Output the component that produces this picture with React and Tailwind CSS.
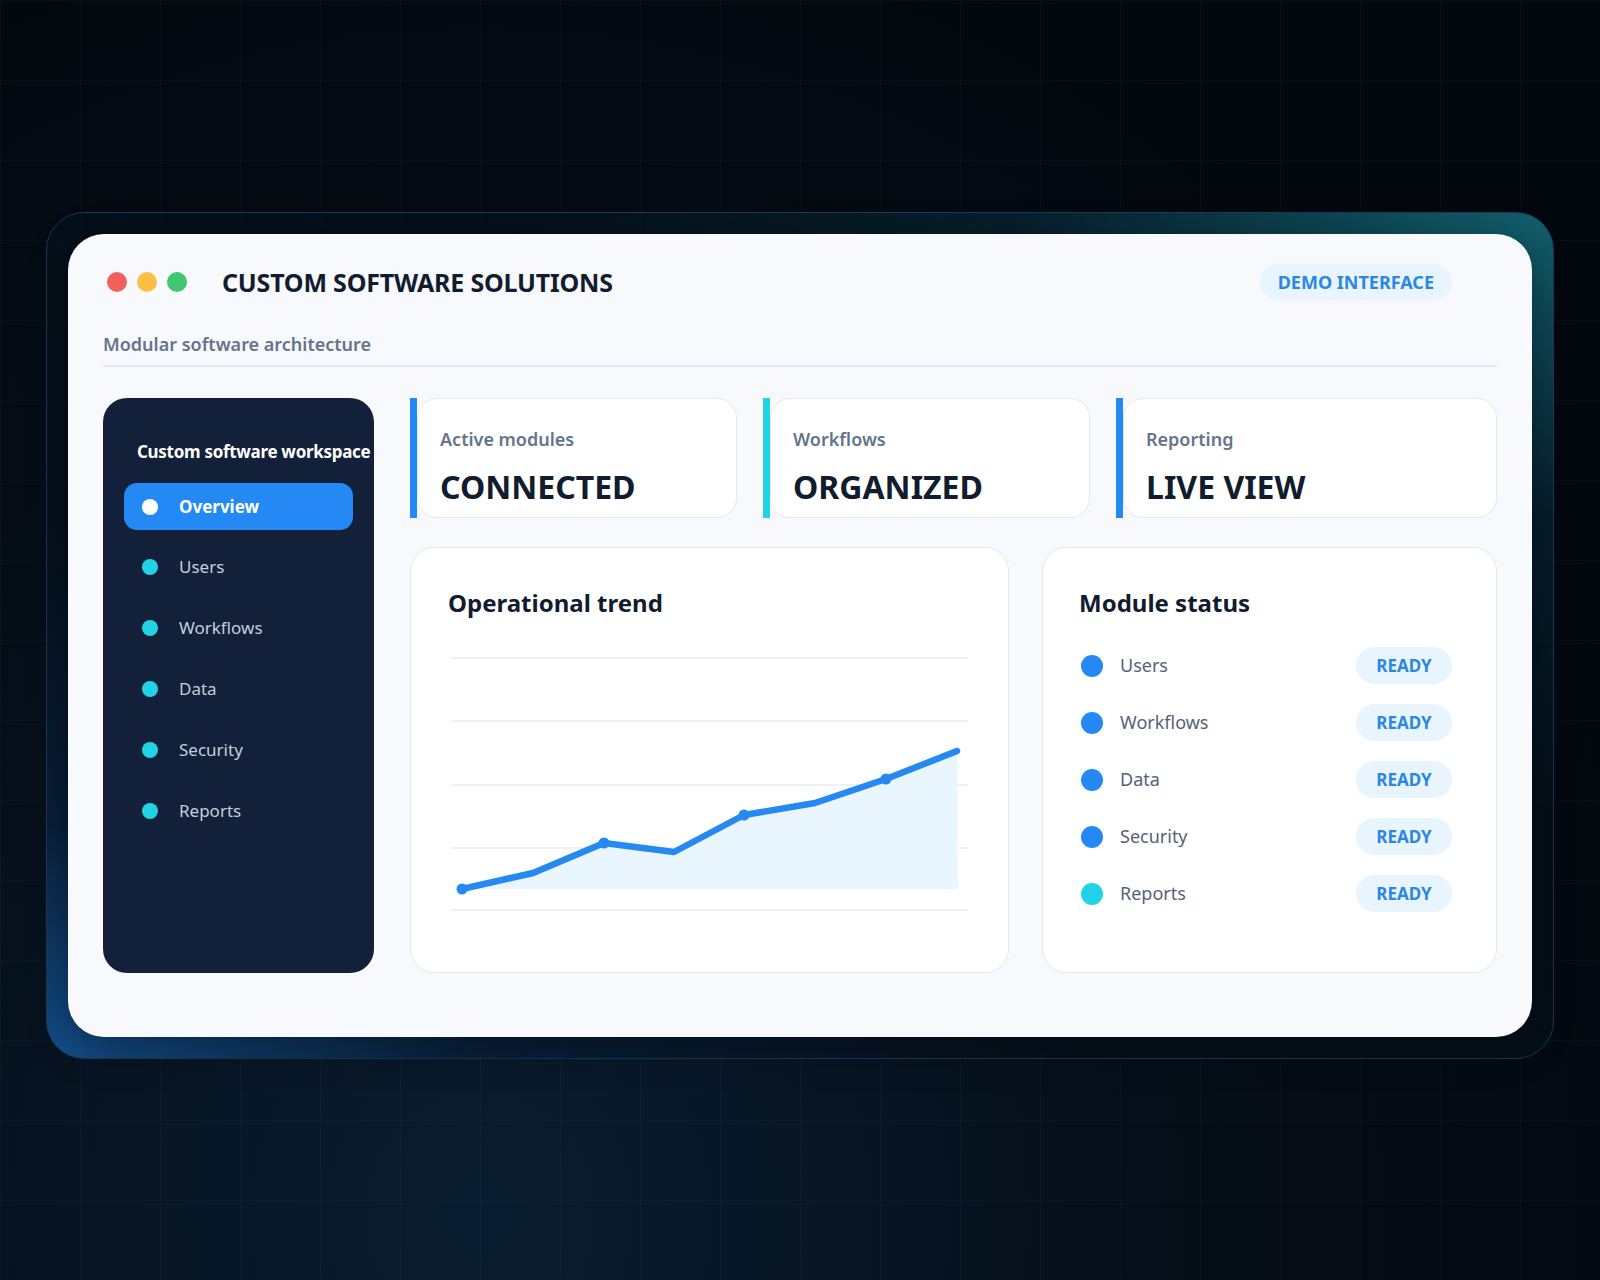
import React from "react";

const navItems = ["Users", "Workflows", "Data", "Security", "Reports"];
const modules = [
  { name: "Users", color: "bg-[#2589f5]" },
  { name: "Workflows", color: "bg-[#2589f5]" },
  { name: "Data", color: "bg-[#2589f5]" },
  { name: "Security", color: "bg-[#2589f5]" },
  { name: "Reports", color: "bg-[#22d3e6]" },
];

const pts = [
  [11, 238],
  [82, 222],
  [153, 192],
  [223, 201],
  [293, 164],
  [364, 152],
  [435, 128],
  [506, 100],
];

function Chart() {
  const line = pts.map((p) => p.join(",")).join(" ");
  const area = `11,238 ${line} 507,238`;
  return (
    <svg width="517" height="262" viewBox="0 0 517 262" className="block">
      {[7, 70, 134, 197, 259].map((y) => (
        <line key={y} x1="0" x2="517" y1={y} y2={y} stroke="#edf1f5" strokeWidth="2" />
      ))}
      <polygon points={area} fill="#e9f5ff" />
      <polyline
        points={line}
        fill="none"
        stroke="#2589f0"
        strokeWidth="6.5"
        strokeLinejoin="round"
        strokeLinecap="round"
      />
      {[pts[0], pts[2], pts[4], pts[6]].map(([x, y]) => (
        <circle key={x} cx={x} cy={y} r="5.5" fill="#2589f0" />
      ))}
    </svg>
  );
}

function Stat({ label, value, bar, className }) {
  return (
    <div className={`flex h-full ${className}`}>
      <div className={`w-[7px] h-full ${bar}`} />
      <div className="flex-1 h-full rounded-[20px] border border-[#e3e8ef] bg-white pl-[22px] pt-[28px]">
        <div className="text-[18px] leading-[24px] font-semibold text-[#64748b]">{label}</div>
        <div className="mt-[16px] text-[32px] leading-[40px] font-bold text-[#111c2e]">{value}</div>
      </div>
    </div>
  );
}

export default function App() {
  return (
    <div className="relative w-full min-h-[1280px] overflow-hidden bg-[#040a11] bg-[radial-gradient(ellipse_at_30%_95%,#0a1d30_0%,#050d17_45%,#03080e_80%)] font-['Noto_Sans','Open_Sans',sans-serif]">
      <div className="pointer-events-none absolute inset-0 bg-[linear-gradient(to_right,rgba(120,160,200,0.045)_1px,transparent_1px),linear-gradient(to_bottom,rgba(120,160,200,0.045)_1px,transparent_1px)] bg-[size:80px_80px]" />
      <div className="relative pt-[212px] pl-[46px]">
        <div className="w-[1508px] h-[847px] rounded-[38px] border border-[#1a3858] p-[21px] bg-[radial-gradient(ellipse_at_100%_0%,rgba(20,110,125,0.85)_0%,rgba(10,60,80,0.35)_25%,transparent_50%),radial-gradient(ellipse_at_0%_100%,rgba(20,85,150,0.9)_0%,rgba(12,50,95,0.4)_20%,transparent_45%)] bg-[#06111d]/70">
          <div className="w-full h-full rounded-[36px] bg-[#f7f9fc] px-[35px] pt-[31px] shadow-[0_10px_40px_rgba(0,0,0,0.35)]">
            {/* Header */}
            <div className="flex items-center h-[34px] pl-[4px] pr-[45px]">
              <div className="flex items-center gap-[10px]">
                <span className="w-[20px] h-[20px] rounded-full bg-[#f2605c]" />
                <span className="w-[20px] h-[20px] rounded-full bg-[#fdbf43]" />
                <span className="w-[20px] h-[20px] rounded-full bg-[#3fc66f]" />
              </div>
              <h1 className="ml-[35px] text-[25px] leading-[34px] font-bold text-[#111c2e] tracking-[-0.2px]">
                CUSTOM SOFTWARE SOLUTIONS
              </h1>
              <div className="flex-1" />
              <div className="h-[36px] px-[18px] rounded-full bg-[#e8f4fe] flex items-center text-[18px] font-bold text-[#2b87e3]">
                DEMO INTERFACE
              </div>
            </div>

            {/* Subtitle */}
            <div className="mt-[33px] pb-[9px] border-b-2 border-[#e3e8ef]">
              <div className="text-[18px] leading-[24px] font-semibold text-[#64748b]">
                Modular software architecture
              </div>
            </div>

            {/* Main */}
            <div className="mt-[31px] flex gap-[36px]">
              {/* Sidebar */}
              <aside className="w-[271px] h-[575px] shrink-0 rounded-[24px] bg-[#13203a] overflow-hidden px-[21px] pt-[42px]">
                <div className="pl-[13px] text-[17px] leading-[24px] font-bold text-white whitespace-nowrap tracking-[-0.3px]">
                  Custom software workspace
                </div>
                <div className="mt-[19px] h-[47px] rounded-[13px] bg-[#2589f5] flex items-center pl-[18px] gap-[21px]">
                  <span className="w-[16px] h-[16px] rounded-full bg-white" />
                  <span className="text-[17px] font-bold text-white">Overview</span>
                </div>
                <div className="mt-[13px] flex flex-col gap-[14px]">
                  {navItems.map((n) => (
                    <div key={n} className="h-[47px] flex items-center pl-[18px] gap-[21px]">
                      <span className="w-[16px] h-[16px] rounded-full bg-[#22d3e6]" />
                      <span className="text-[17px] text-[#c3cedc]">{n}</span>
                    </div>
                  ))}
                </div>
              </aside>

              {/* Right */}
              <div className="flex-1 flex flex-col gap-[29px]">
                <div className="flex gap-[26px] h-[120px]">
                  <Stat label="Active modules" value="CONNECTED" bar="bg-[#2589f5]" className="w-[327px]" />
                  <Stat label="Workflows" value="ORGANIZED" bar="bg-[#22d3e6]" className="w-[327px]" />
                  <Stat label="Reporting" value="LIVE VIEW" bar="bg-[#2589f5]" className="flex-1" />
                </div>

                <div className="flex gap-[33px] h-[426px]">
                  <div className="w-[599px] h-full rounded-[24px] border border-[#e3e8ef] bg-white pl-[37px] pt-[39px]">
                    <h2 className="text-[24px] leading-[32px] font-bold text-[#111c2e]">Operational trend</h2>
                    <div className="mt-[32px] ml-[3px]">
                      <Chart />
                    </div>
                  </div>

                  <div className="flex-1 h-full rounded-[24px] border border-[#e3e8ef] bg-white pl-[36px] pr-[44px] pt-[39px]">
                    <h2 className="text-[24px] leading-[32px] font-bold text-[#111c2e]">Module status</h2>
                    <div className="mt-[28px] flex flex-col gap-[20px]">
                      {modules.map((m) => (
                        <div key={m.name} className="h-[37px] flex items-center">
                          <span className={`ml-[2px] w-[22px] h-[22px] rounded-full ${m.color}`} />
                          <span className="ml-[17px] text-[18px] text-[#556274]">{m.name}</span>
                          <div className="flex-1" />
                          <div className="w-[96px] h-[37px] rounded-full bg-[#e8f4fe] flex items-center justify-center text-[17px] font-bold text-[#2b87e3]">
                            READY
                          </div>
                        </div>
                      ))}
                    </div>
                  </div>
                </div>
              </div>
            </div>
          </div>
        </div>
      </div>
    </div>
  );
}
